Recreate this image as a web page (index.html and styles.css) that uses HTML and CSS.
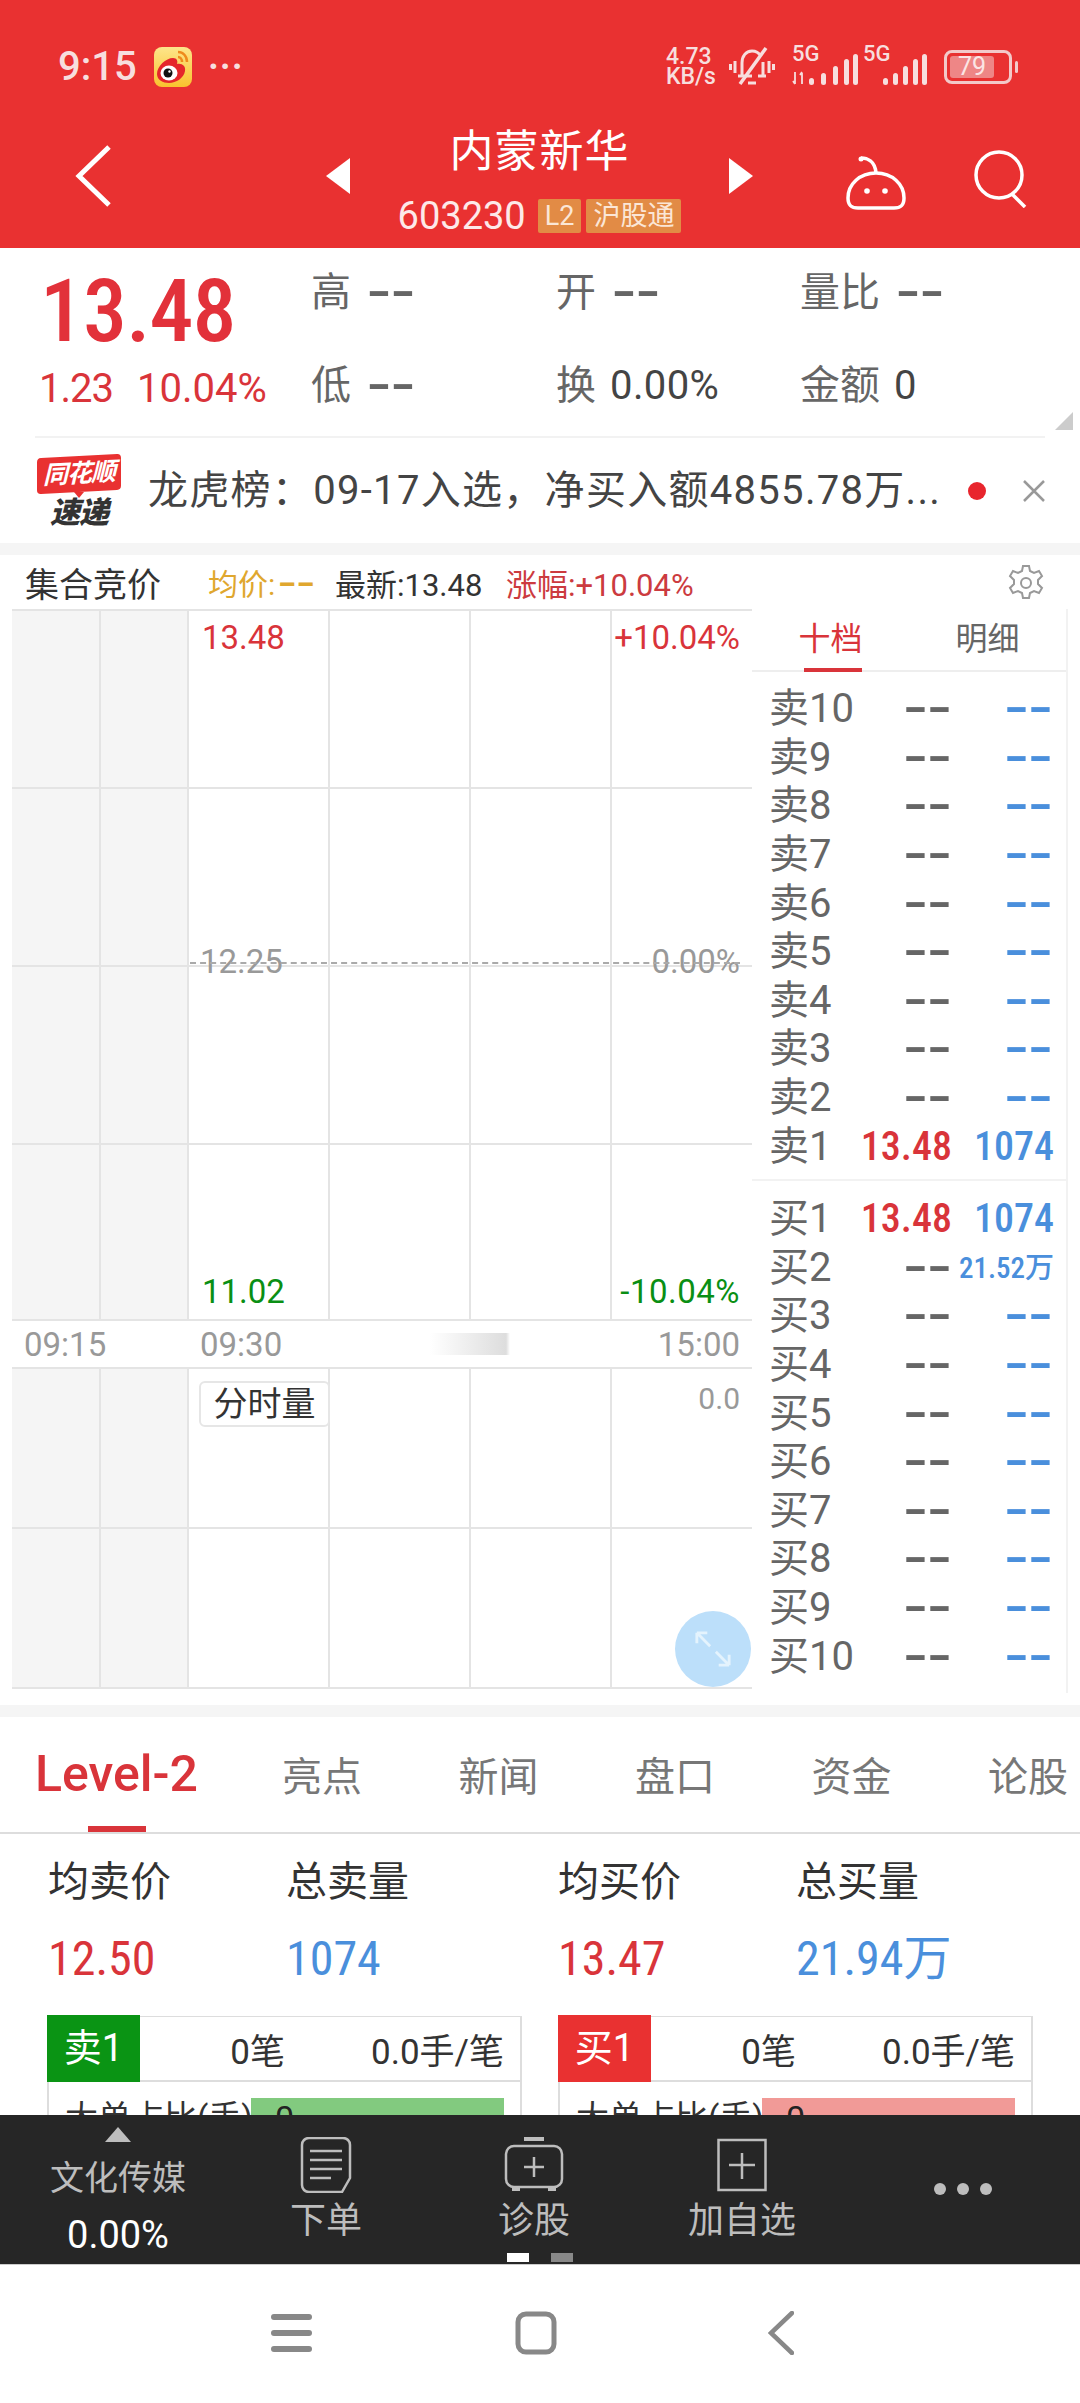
FILE: index.html
```html
<!DOCTYPE html>
<html lang="zh">
<head>
<meta charset="utf-8">
<title>内蒙新华</title>
<link rel="stylesheet" href="styles.css">
</head>
<body>
<div class="main">
<header class="header">
  <div class="status">
    <div class="status-left">
      <span class="clock">9:15</span>
      <svg class="weibo" viewBox="0 0 38 40"><defs><linearGradient id="wb" x1="0" y1="0" x2="0" y2="1"><stop offset="0" stop-color="#fde58a"/><stop offset="1" stop-color="#f9c22e"/></linearGradient></defs><rect width="38" height="40" rx="8" fill="url(#wb)"/><path d="M3 27c0-8 9-16 16-16 4 0 5 3 4 6 5-1 9 2 8 7-1 7-9 12-16 12-6 0-12-3-12-9z" fill="#e5262b"/><ellipse cx="15" cy="26" rx="8.500" ry="7.500" fill="#fff"/><circle cx="14" cy="26" r="4.500" fill="#111"/><circle cx="15.500" cy="24.500" r="1.200" fill="#fff"/><path d="M24 5c5 0 9 4 9 10M24 10c2 0 4 2 4 5" fill="none" stroke="#ef8a1c" stroke-width="2.500"/></svg>
      <span class="more">···</span>
    </div>
    <div class="status-right">
      <span class="speed">4.73<br>KB/s</span>
      <svg class="bell" viewBox="0 0 46 42" fill="none" stroke="#f7dede" stroke-width="3"><path d="M13 29V17c0-7 4-12 10-12 4 0 7 2 9 5M34 16v13M9 30h14M29 30h8M19 37h8"/><path d="M37 2 11 38" stroke-width="3.500"/><path d="M6 15v12M1.500 18v6M40 15v12M44.500 18v6"/></svg>
      <div class="signal"><span class="sg">5G</span><svg viewBox="0 0 66 36" width="66" height="36"><path d="M3 21v12M1 30l2 3M10 33V22M8 24l2-3" stroke="#f7dede" stroke-width="1.800" fill="none"/><rect x="17" y="27" width="5" height="7" rx="2.500" fill="#f7dede"/><rect x="29" y="22" width="5" height="12" rx="2.500" fill="#f7dede"/><rect x="41" y="15" width="5" height="19" rx="2.500" fill="#f7dede"/><rect x="52" y="8" width="5" height="26" rx="2.500" fill="#f7dede"/><rect x="61" y="3" width="5" height="31" rx="2.500" fill="#f7dede"/></svg></div>
      <div class="signal two"><span class="sg">5G</span><svg viewBox="0 0 66 36" width="66" height="36"><rect x="20" y="27" width="5" height="7" rx="2.500" fill="#f7dede"/><rect x="30" y="22" width="5" height="12" rx="2.500" fill="#f7dede"/><rect x="40" y="15" width="5" height="19" rx="2.500" fill="#f7dede"/><rect x="50" y="8" width="5" height="26" rx="2.500" fill="#f7dede"/><rect x="59" y="3" width="5" height="31" rx="2.500" fill="#f7dede"/></svg></div>
      <div class="battery"><span class="batt-fill">79</span></div><i class="batt-tip"></i>
    </div>
  </div>
  <div class="nav">
    <svg class="back" viewBox="0 0 36 62" fill="none" stroke="#fff" stroke-width="5"><path d="M34 2 4 31l30 29"/></svg>
    <i class="tri-left"></i>
    <div class="title">
      <div class="name">内蒙新华</div>
      <div class="code-line"><span class="code">603230</span><span class="badge">L2</span><span class="badge">沪股通</span></div>
    </div>
    <i class="tri-right"></i>
    <svg class="robot" viewBox="0 0 60 54" fill="none" stroke="#fff" stroke-width="3.500"><path d="M15 2c6 0 14 3 15 15"/><circle cx="15" cy="3" r="2.500" fill="#fff" stroke="none"/><path d="M30 17c16 0 28 11 28 25 0 8-4 10-10 10H12C6 52 2 50 2 42 2 28 14 17 30 17z"/><circle cx="21" cy="35" r="2.800" fill="#fff" stroke="none"/><circle cx="39" cy="35" r="2.800" fill="#fff" stroke="none"/></svg>
    <svg class="search" viewBox="0 0 56 58" fill="none" stroke="#fff" stroke-width="3.500"><ellipse cx="25" cy="25" rx="23" ry="23"/><path d="m38 44 13 13"/></svg>
  </div>
</header>

<section class="quote">
  <div class="quote-top">
    <div class="price-box">
      <div class="price">13.48</div>
      <div class="change"><span class="chg-abs">1.23</span><span>10.04%</span></div>
    </div>
    <div class="quote-grid">
      <div class="q"><span class="q-l">高</span><span class="dash">--</span></div>
      <div class="q"><span class="q-l">开</span><span class="dash">--</span></div>
      <div class="q"><span class="q-l">量比</span><span class="dash">--</span></div>
      <div class="q"><span class="q-l">低</span><span class="dash">--</span></div>
      <div class="q"><span class="q-l">换</span><span class="q-v">0.00%</span></div>
      <div class="q"><span class="q-l">金额</span><span class="q-v">0</span></div>
    </div>
    <i class="corner"></i>
  </div>
  <div class="news">
    <div class="logo"><span class="logo-top">同花顺</span><i class="logo-tail"></i><span class="logo-bot">速递</span></div>
    <div class="news-text">龙虎榜：09-17入选，净买入额4855.78万...</div>
    <i class="news-dot"></i>
    <svg class="news-x" viewBox="0 0 24 22" fill="none" stroke="#999" stroke-width="2.500"><path d="m2 1 20 20M22 1 2 21"/></svg>
  </div>
</section>

<section class="market">
  <div class="market-head">
    <span class="mh-title">集合竞价</span>
    <span class="mh-avg">均价:<span class="avg-dash">--</span></span>
    <span class="mh-new">最新:13.48</span>
    <span class="mh-up">涨幅:+10.04%</span>
    <svg class="gear" viewBox="0 0 38 38" fill="none" stroke="#999" stroke-width="2"><path d="M16 2h6l1 5 4 2 5-2 3 5-4 4v4l4 4-3 5-5-2-4 2-1 5h-6l-1-5-4-2-5 2-3-5 4-4v-4l-4-4 3-5 5 2 4-2z"/><circle cx="19" cy="19" r="5"/></svg>
  </div>
  <div class="market-body">
    <div class="charts">
      <div class="plot price-plot">
        <span class="lbl tl red">13.48</span>
        <span class="lbl tr red">+10.04%</span>
        <span class="lbl ml gray">12.25</span>
        <span class="lbl mr gray">0.00%</span>
        <i class="midline"></i>
        <span class="lbl bl green">11.02</span>
        <span class="lbl br green">-10.04%</span>
      </div>
      <div class="axis"><span class="t1">09:15</span><span class="t2">09:30</span><i class="blur"></i><span class="t3">15:00</span></div>
      <div class="plot vol-plot">
        <span class="vol-tag">分时量</span>
        <span class="lbl vr gray">0.0</span>
        <div class="expand"><svg viewBox="0 0 40 40" fill="none" stroke="#e4f3fd" stroke-width="3"><path d="M3 3 17 17M3 3v11M3 3h11M37 37 23 23M37 37V26M37 37H26"/></svg></div>
      </div>
    </div>
    <aside class="book">
      <div class="book-tabs"><span class="on">十档</span><span>明细</span></div>
      <div class="side asks">
        <div class="row"><span class="r-l">卖10</span><span class="dash">--</span><span class="dash blue">--</span></div>
        <div class="row"><span class="r-l">卖9</span><span class="dash">--</span><span class="dash blue">--</span></div>
        <div class="row"><span class="r-l">卖8</span><span class="dash">--</span><span class="dash blue">--</span></div>
        <div class="row"><span class="r-l">卖7</span><span class="dash">--</span><span class="dash blue">--</span></div>
        <div class="row"><span class="r-l">卖6</span><span class="dash">--</span><span class="dash blue">--</span></div>
        <div class="row"><span class="r-l">卖5</span><span class="dash">--</span><span class="dash blue">--</span></div>
        <div class="row"><span class="r-l">卖4</span><span class="dash">--</span><span class="dash blue">--</span></div>
        <div class="row"><span class="r-l">卖3</span><span class="dash">--</span><span class="dash blue">--</span></div>
        <div class="row"><span class="r-l">卖2</span><span class="dash">--</span><span class="dash blue">--</span></div>
        <div class="row"><span class="r-l">卖1</span><span class="num red">13.48</span><span class="num blue">1074</span></div>
      </div>
      <div class="side bids">
        <div class="row"><span class="r-l">买1</span><span class="num red">13.48</span><span class="num blue">1074</span></div>
        <div class="row"><span class="r-l">买2</span><span class="dash">--</span><span class="small blue">21.52万</span></div>
        <div class="row"><span class="r-l">买3</span><span class="dash">--</span><span class="dash blue">--</span></div>
        <div class="row"><span class="r-l">买4</span><span class="dash">--</span><span class="dash blue">--</span></div>
        <div class="row"><span class="r-l">买5</span><span class="dash">--</span><span class="dash blue">--</span></div>
        <div class="row"><span class="r-l">买6</span><span class="dash">--</span><span class="dash blue">--</span></div>
        <div class="row"><span class="r-l">买7</span><span class="dash">--</span><span class="dash blue">--</span></div>
        <div class="row"><span class="r-l">买8</span><span class="dash">--</span><span class="dash blue">--</span></div>
        <div class="row"><span class="r-l">买9</span><span class="dash">--</span><span class="dash blue">--</span></div>
        <div class="row"><span class="r-l">买10</span><span class="dash">--</span><span class="dash blue">--</span></div>
      </div>
    </aside>
  </div>
</section>

<section class="detail">
  <nav class="tabs">
    <span class="tab active">Level-2</span><span class="tab">亮点</span><span class="tab">新闻</span><span class="tab">盘口</span><span class="tab">资金</span><span class="tab">论股</span>
  </nav>
  <div class="stats">
    <div class="stat s1"><span class="st-l">均卖价</span><span class="st-v red">12.50</span></div>
    <div class="stat s2"><span class="st-l">总卖量</span><span class="st-v blue">1074</span></div>
    <div class="stat s3"><span class="st-l">均买价</span><span class="st-v red">13.47</span></div>
    <div class="stat s4"><span class="st-l">总买量</span><span class="st-v blue">21.94万</span></div>
  </div>
  <div class="cards">
    <div class="card">
      <div class="c-head"><span class="c-badge sell">卖1</span><span class="c-n">0笔</span><span class="c-a">0.0手/笔</span></div>
      <div class="c-row"><span class="c-t">大单占比(手)</span><span class="c-bar b-green">0</span></div>
    </div>
    <div class="card">
      <div class="c-head"><span class="c-badge buy">买1</span><span class="c-n">0笔</span><span class="c-a">0.0手/笔</span></div>
      <div class="c-row"><span class="c-t">大单占比(手)</span><span class="c-bar b-red">0</span></div>
    </div>
  </div>
</section>
</div>

<footer class="toolbar">
  <div class="tool sector"><i class="up"></i><span class="sec-name">文化传媒</span><span class="sec-val">0.00%</span></div>
  <div class="tool">
    <svg class="tool-ic" viewBox="0 0 50 56" fill="none" stroke="#bdbdbd" stroke-width="2.500"><path d="M8 1h34c4 0 7 3 7 7v33l-8 14H8c-4 0-7-3-7-7V8c0-4 3-7 7-7z"/><path d="M9 14h32M9 23h32M9 32h32M9 41h21"/></svg>
    <span class="tool-l">下单</span>
  </div>
  <div class="tool">
    <svg class="tool-ic" viewBox="0 0 60 56" fill="none" stroke="#bdbdbd" stroke-width="2.500"><path d="M20 2h20" stroke-width="4"/><rect x="2" y="9" width="56" height="41" rx="8"/><path d="M8 52h8M44 52h8" stroke-width="4"/><path d="M30 20v20M20 30h20"/></svg>
    <span class="tool-l">诊股</span>
  </div>
  <div class="tool">
    <svg class="tool-ic" viewBox="0 0 50 56" fill="none" stroke="#bdbdbd" stroke-width="2.500"><rect x="1.500" y="3" width="47" height="50"/><path d="M25 16v26M12 28h26"/></svg>
    <span class="tool-l">加自选</span>
  </div>
  <div class="tool dots"><i></i><i></i><i></i></div>
  <div class="pager"><i class="cur"></i><i></i></div>
</footer>

<div class="sysnav">
  <svg class="n-menu" viewBox="0 0 42 42" fill="#888"><rect y="2" width="41" height="6" rx="3"/><rect y="18" width="41" height="6" rx="3"/><rect y="34" width="41" height="6" rx="3"/></svg>
  <svg class="n-home" viewBox="0 0 42 44" fill="none" stroke="#888" stroke-width="5"><rect x="3" y="3" width="36" height="38" rx="8"/></svg>
  <svg class="n-back" viewBox="0 0 26 44" fill="none" stroke="#888" stroke-width="4.500" stroke-linecap="round"><path d="M24 2 3 22l21 20"/></svg>
</div>
</body>
</html>
```
FILE: styles.css
```css
* { box-sizing: border-box; }
html, body { margin: 0; padding: 0; }
body {
  width: 1080px;
  height: 2403px;
  overflow: hidden;
  display: flex;
  flex-direction: column;
  background: #fff;
  font-family: Roboto, "Noto Sans CJK SC", sans-serif;
  color: #333;
}
i { display: block; font-style: normal; }
.red { color: #d9343a; }
.blue { color: #4a8fdc; }
.green { color: #0a8f14; }
.gray { color: #999; }

.main { height: 2115px; overflow: hidden; flex: none; }

/* header */
.header { height: 248px; background: #e93131; color: #fff; }
.status { height: 124px; display: flex; justify-content: space-between; align-items: flex-start; padding: 47px 62px 0 58px; color: #f7dede; }
.status-left { display: flex; align-items: center; height: 40px; }
.clock { font-size: 40px; font-weight: 500; width: 96px; line-height: 40px; }
.weibo { width: 38px; height: 40px; }
.more { font-size: 36px; font-weight: 700; margin-left: 16px; line-height: 40px; letter-spacing: 1px; }
.status-right { display: flex; align-items: center; height: 40px; }
.speed { font-size: 23px; line-height: 20px; font-weight: 500; width: 63px; }
.bell { width: 46px; height: 42px; }
.signal { position: relative; width: 66px; height: 36px; margin-left: 17px; }
.signal.two { margin-left: 5px; }
.sg { position: absolute; left: 0; top: -5px; font-size: 22px; font-weight: 500; line-height: 20px; }
.signal svg { position: absolute; left: 0; top: 2px; }
.battery { width: 68px; height: 34px; margin-left: 15px; border: 3px solid #f3c9c9; border-radius: 8px; padding: 3px; }
.batt-fill { display: block; width: 44px; height: 22px; background: #ee8686; border-radius: 3px; font-size: 25px; line-height: 22px; text-align: center; color: #fbe5e5; }
.batt-tip { width: 3px; height: 12px; margin-left: 3px; background: #f3c9c9; border-radius: 2px; }

.nav { height: 124px; display: flex; align-items: center; padding-left: 75px; position: relative; }
.back { width: 36px; height: 62px; margin-top: -20px; flex: none; }
.tri-left { width: 0; height: 0; border: solid transparent; border-width: 18px 24px 18px 0; border-right-color: #fff; margin: -20px 0 0 215px; flex: none; }
.tri-right { width: 0; height: 0; border: solid transparent; border-width: 18px 0 18px 24px; border-left-color: #fff; margin: -20px 0 0 0; flex: none; }
.title { width: 379px; display: flex; flex-direction: column; align-items: center; margin-top: -12px; }
.name { font-size: 44px; line-height: 56px; color: #fff; letter-spacing: 1px; }
.code-line { display: flex; align-items: center; height: 40px; margin-top: 16px; }
.code { font-size: 38px; font-weight: 400; line-height: 40px; margin-right: 12px; color: #fde9e9; }
.badge { height: 34px; line-height: 34px; padding: 0 7px; margin-right: 5px; background: #e28b45; border-radius: 2px; font-size: 27px; color: #fbe6d6; }
.badge:last-child { margin-right: 0; }
.robot { width: 60px; height: 54px; margin: -6px 0 0 93px; flex: none; }
.search { width: 56px; height: 58px; margin: -14px 0 0 68px; flex: none; }

/* quote */
.quote { height: 295px; }
.quote-top { height: 190px; display: flex; position: relative; padding: 0 0 0 39px; }
.quote-top::after { content: ""; position: absolute; left: 35px; right: 35px; bottom: 0; height: 2px; background: #f2f2f2; }
.price-box { width: 272px; }
.price { font-size: 88px; font-weight: 500; line-height: 104px; color: #e2313a; margin-top: 11px; margin-left: 1px; font-stretch: 87%; letter-spacing: -1px; }
.change { display: flex; gap: 24px; font-size: 40px; line-height: 48px; color: #d9343a; margin-top: 2px; }
.chg-abs { letter-spacing: -1px; }
.quote-grid { display: grid; grid-template-columns: 245px 244px 244px; grid-template-rows: 93px 93px; flex: none; padding-top: 13px; }
.q { display: flex; align-items: center; height: 64px; }
.q-l { font-size: 40px; color: #666; margin-right: 16px; line-height: 64px; }
.q-v { font-size: 40px; color: #444; line-height: 64px; margin-left: -2px; letter-spacing: 0.4px; }
.dash { display: inline-block; font-family: "Liberation Sans", sans-serif; font-size: 40px; font-weight: 700; color: #666; line-height: 40px; width: 27px; white-space: nowrap; transform: translateY(-3px) scaleX(1.8); transform-origin: left center; }
.corner { position: absolute; right: 7px; top: 164px; width: 0; height: 0; border-style: solid; border-width: 0 0 18px 18px; border-color: transparent transparent #ccc transparent; }

.news { height: 105px; display: flex; align-items: center; padding-left: 36px; position: relative; }
.logo { width: 86px; height: 70px; display: flex; flex-direction: column; align-items: center; position: relative; }
.logo-top { width: 84px; height: 36px; background: #e93131; color: #fff; border-radius: 4px; font-size: 25px; font-style: italic; font-weight: 700; line-height: 36px; text-align: center; white-space: nowrap; letter-spacing: -1px; transform: skewY(-3deg); }
.logo-tail { width: 0; height: 0; border: solid transparent; border-width: 6px 5px 0; border-top-color: #e93131; }
.logo-bot { font-size: 30px; font-style: italic; font-weight: 900; color: #333; line-height: 30px; letter-spacing: -1px; }
.news-text { font-size: 40px; color: #444; margin-left: 26px; width: 820px; white-space: nowrap; letter-spacing: 1.300px; line-height: 50px; }
.news-dot { width: 18px; height: 18px; border-radius: 50%; background: #e8252d; flex: none; }
.news-x { width: 24px; height: 22px; margin-left: 36px; flex: none; }

/* market */
.market { border-top: 12px solid #f5f5f5; height: 1162px; }
.market-head { height: 54px; display: flex; align-items: center; position: relative; padding-left: 25px; }
.mh-title { font-size: 34px; color: #333; width: 183px; }
.mh-avg { font-size: 30px; color: #e0a72e; width: 127px; white-space: nowrap; display: flex; align-items: center; }
.avg-dash { display: inline-block; font-family: "Liberation Sans", sans-serif; font-size: 30px; font-weight: 700; line-height: 30px; margin-left: 3px; transform: scaleX(1.85); transform-origin: left center; }
.mh-new { font-size: 31px; color: #333; width: 171px; }
.mh-up { font-size: 31px; color: #cc3b3f; }
.gear { width: 38px; height: 38px; position: absolute; right: 35px; top: 9px; }
.market-body { display: flex; padding-left: 12px; }
.charts { width: 740px; flex: none; }

.plot {
  position: relative;
  background-color: #fff;
  background-image:
    linear-gradient(#e4e4e4, #e4e4e4), linear-gradient(#e4e4e4, #e4e4e4), linear-gradient(#e4e4e4, #e4e4e4),
    linear-gradient(#e4e4e4, #e4e4e4), linear-gradient(#e4e4e4, #e4e4e4), linear-gradient(#f5f5f5, #f5f5f5);
  background-size: 2px 100%, 2px 100%, 2px 100%, 2px 100%, 2px 100%, 176px 100%;
  background-position: 87px 0, 175px 0, 316px 0, 457px 0, 598px 0, 0 0;
  background-repeat: no-repeat;
}
.plot::before { content: ""; position: absolute; inset: 0; pointer-events: none;
  background: repeating-linear-gradient(to bottom, #e4e4e4 0 2px, transparent 2px var(--step)); }
.price-plot { height: 712px; --step: 178px; border-bottom: 2px solid #e4e4e4; }
.vol-plot { height: 322px; --step: 160px; border-bottom: 2px solid #e4e4e4; }
.lbl { position: absolute; font-size: 33px; line-height: 36px; z-index: 1; }
.tl { left: 190px; top: 11px; }
.tr { right: 12px; top: 11px; }
.ml { left: 188px; top: 335px; }
.mr { right: 12px; top: 335px; }
.bl { left: 190px; top: 665px; }
.br { right: 12px; top: 665px; letter-spacing: 0.5px; }
.vr { right: 12px; top: 14px; font-size: 30px; }
.midline { position: absolute; left: 178px; right: 12px; top: 353px; border-top: 2px dashed #aaa; z-index: 1; }
.axis { height: 46px; display: flex; align-items: center; position: relative; font-size: 33px; color: #999; }
.t1 { margin-left: 12px; width: 176px; }
.t2 { width: 230px; }
.t3 { margin-left: auto; margin-right: 12px; }
.blur { width: 80px; height: 22px; background: linear-gradient(to right, #fff, #ddd 95%, #fff); }
.vol-tag { position: absolute; left: 187px; top: 14px; height: 46px; width: 131px; border: 2px solid #e6e6e6; border-radius: 6px; background: #fff; font-size: 34px; line-height: 42px; text-align: center; color: #333; z-index: 1; }
.expand { position: absolute; left: 663px; top: 244px; width: 76px; height: 76px; border-radius: 50%; background: #bcdffa; display: flex; align-items: center; justify-content: center; z-index: 1; }
.expand svg { width: 38px; height: 38px; }

.book { width: 316px; flex: none; border-right: 2px solid #f2f2f2; }
.book-tabs { height: 63px; display: flex; font-size: 32px; color: #666; border-bottom: 2px solid #eee; position: relative; }
.book-tabs span { width: 158px; text-align: center; line-height: 60px; }
.book-tabs .on { color: #d9343a; position: relative; }
.book-tabs .on::after { content: ""; position: absolute; left: 52px; bottom: -2px; width: 58px; height: 4px; background: #d9343a; }
.side { display: flex; flex-direction: column; padding: 13px 0 12px 17px; }
.asks { height: 509px; border-bottom: 2px solid #f2f2f2; }
.bids { padding-top: 14px; }
.row { height: 48.6px; flex: none; display: flex; align-items: center; }
.r-l { font-size: 40px; color: #666; width: 90px; line-height: 48px; white-space: nowrap; }
.num, .small { text-align: right; }
.num { font-size: 40px; font-weight: 500; line-height: 48px; font-stretch: 87%; }
.small { font-size: 29px; font-weight: 500; line-height: 48px; white-space: nowrap; font-stretch: 87%; }
.row > .num:nth-child(2) { width: 93px; }
.row > .num:nth-child(3), .row > .small { width: 102px; }
.row > .dash { transform-origin: right center; }
.row > .dash:nth-child(2) { margin-left: 66px; }
.row > .dash:nth-child(3) { margin-left: 74px; }
.dash.blue { color: #4a8fdc; }

/* detail */
.detail { border-top: 12px solid #f5f5f5; }
.tabs { height: 117px; display: flex; align-items: center; padding: 0 0 2px 35px; border-bottom: 2px solid #ddd; position: relative; white-space: nowrap; }
.tabs::after { content: ""; position: absolute; left: 88px; bottom: 0; width: 58px; height: 6px; background: #d9343a; }
.tab { font-size: 40px; color: #777; width: 176.500px; flex: none; }
.tab.active { font-size: 50px; font-weight: 500; color: #d9343a; width: 247px; font-stretch: 94%; }
.stats { height: 182px; display: flex; }
.stat { display: flex; flex-direction: column; width: 238px; }
.s1 { margin-left: 48px; }
.s2 { width: 272px; }
.st-l { font-size: 41px; color: #333; line-height: 48px; margin-top: 24px; }
.st-v { font-size: 48px; line-height: 56px; margin-top: 25px; white-space: nowrap; font-stretch: 87%; }
.cards { display: flex; gap: 36px; padding-left: 47px; }
.card { width: 475px; height: 200px; border: 2px solid #ddd; border-top-width: 1px; }
.c-head { height: 66px; display: flex; align-items: center; border-bottom: 2px solid #ddd; margin: -1px 0 0 -2px; }
.c-badge { width: 93px; height: 67px; font-size: 38px; line-height: 67px; text-align: center; color: #fff; }
.sell { background: #0a9414; }
.buy { background: #e93131; }
.c-n { font-size: 35px; width: 145px; text-align: right; color: #333; }
.c-a { font-size: 35px; width: 219px; text-align: right; color: #333; }
.c-row { display: flex; align-items: flex-start; padding-top: 16px; }
.c-t { font-size: 33px; width: 202px; padding-left: 16px; color: #333; line-height: 40px; white-space: nowrap; overflow: hidden; }
.c-bar { width: 253px; height: 40px; font-size: 34px; line-height: 40px; padding-left: 24px; color: #222; }
.b-green { background: #82ca7f; }
.b-red { background: #f19a97; }

/* toolbar */
.toolbar { height: 150px; flex: none; background: #262626; display: grid; grid-template-columns: repeat(5, 208px); padding-left: 14px; position: relative; border-bottom: 1px solid #ccc; }
.tool { display: flex; flex-direction: column; align-items: center; padding-top: 22px; color: #bdbdbd; }
.tool-ic { height: 56px; width: 60px; }
.tool-l { font-size: 36px; line-height: 44px; margin-top: 6px; white-space: nowrap; }
.sector { padding-top: 12px; }
.up { width: 0; height: 0; border: solid transparent; border-width: 0 13px 15px; border-bottom-color: #bdbdbd; }
.sec-name { font-size: 34px; line-height: 44px; margin-top: 14px; white-space: nowrap; }
.sec-val { font-size: 38px; line-height: 44px; margin-top: 13px; color: #fff; }
.dots { flex-direction: row; gap: 11px; justify-content: center; margin-left: 26px; padding-top: 68px; align-items: flex-start; }
.dots i { width: 12px; height: 12px; border-radius: 50%; background: #bdbdbd; }
.pager { position: absolute; left: 507px; top: 138px; display: flex; gap: 22px; }
.pager i { width: 22px; height: 9px; background: #888; }
.pager .cur { background: #fff; }

/* system nav */
.sysnav { flex: 1; position: relative; display: flex; align-items: center; padding: 0 0 0 271px; height: 138px; }
.n-menu { width: 42px; height: 42px; margin-top: -2px; }
.n-home { width: 42px; height: 44px; margin-left: 202px; margin-top: -2px; }
.n-back { width: 26px; height: 44px; margin-left: 211px; margin-top: -2px; }
```
